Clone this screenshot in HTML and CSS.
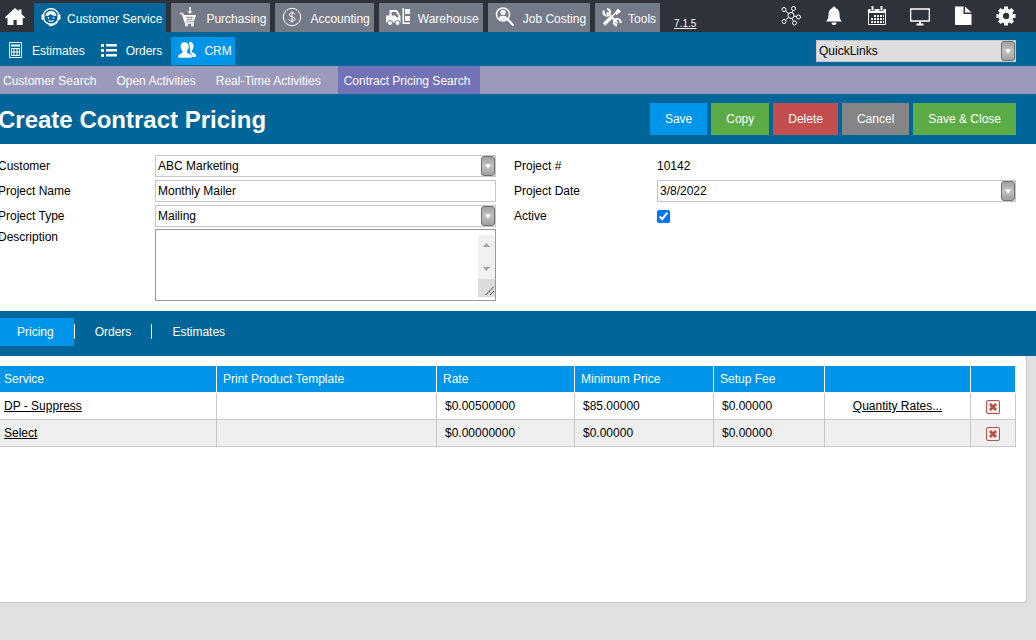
FILE: index.html
```html
<!DOCTYPE html>
<html lang="en">
<head>
    <meta charset="UTF-8">
    <meta name="viewport" content="width=device-width, initial-scale=1.0">
    <title>Create Contract Pricing</title>
    <link rel="stylesheet" href="styles.css">
</head>
<body>
    <header class="topbar">
        <a class="home" href="#" aria-label="Home">
            <svg width="20" height="18" viewBox="0 0 20 18" fill="#fff"><path d="M10 0 0 9.300l1 1.200L2.500 9.500V17h6v-5h3.200v5h6V9.500l1.300 1 1-1.200L16.500 6V1.500h-3V3.200z"/></svg>
        </a>
        <nav class="modules">
            <a class="module compact active" href="#">
                <svg width="20" height="20" viewBox="0 0 20 20"><circle cx="10" cy="9.500" r="7.800" fill="none" stroke="#fff" stroke-width="1.400"/><rect x="0.500" y="7" width="3" height="6" rx="1.500" fill="#fff"/><rect x="16.500" y="7" width="3" height="6" rx="1.500" fill="#fff"/><path d="M4.500 9c2 .3 4-.8 5-2 1.500 1.500 4 2 6 2-.5-3.500-2.500-5-5.500-5S5 5.500 4.500 9z" fill="#fff"/><circle cx="7.500" cy="10.800" r=".9" fill="#fff"/><circle cx="12.500" cy="10.800" r=".9" fill="#fff"/><path d="M7.500 13.500q2.500 1.500 5 0M17 13q-1 5-6 5" fill="none" stroke="#fff" stroke-width="1.100"/><ellipse cx="10" cy="18" rx="2.500" ry="1.200" fill="#fff"/></svg>
                Customer Service
            </a>
            <a class="module" href="#">
                <svg width="20" height="20" viewBox="0 0 20 20" fill="none" stroke="#fff"><path d="M2 6.500h2.500l3 9.500h8.500" stroke-width="1.500"/><path d="M5.500 8.500h12l-2 5.500h-8.500z" fill="#fff"/><path d="M8 10.500h7M8.500 12.500h6M10 9v5M13 9v5" stroke="#747a88" stroke-width=".6"/><path d="M12 0v5" stroke-width="1.500"/><path d="M9.500 4h5L12 7z" fill="#fff" stroke="none"/><circle cx="8.500" cy="18" r="1.500" fill="#fff" stroke="none"/><circle cx="14.500" cy="18" r="1.500" fill="#fff" stroke="none"/></svg>
                Purchasing
            </a>
            <a class="module" href="#">
                <svg width="20" height="20" viewBox="0 0 20 20" fill="none" stroke="#fff"><circle cx="10" cy="10" r="8.700"/><path d="M13 7.500C12.500 6 11.500 5.800 10 5.800S7.300 6.500 7.300 7.800C7.300 10.500 13 9 13 12c0 1.300-1.200 2.200-3 2.200s-3-.7-3.200-2.200M10 4.300v11.400"/></svg>
                Accounting
            </a>
            <a class="module" href="#">
                <svg width="24" height="20" viewBox="0 0 24 20" fill="#fff"><path fill-rule="evenodd" d="M0 8.500h3.500V3h7.500l3.500 6v6.500H0zM5.500 5v3.500H9l2 2h1.500V9L10 5z"/><circle cx="4" cy="16" r="2.500" stroke="#747a88"/><circle cx="11.500" cy="16" r="2.500" stroke="#747a88"/><path d="M16.500 1h1.500v14.500h6V17h-7.500zM19 2h5v5h-5zM19 9h5v5h-5z"/></svg>
                Warehouse
            </a>
            <a class="module" href="#">
                <svg width="20" height="20" viewBox="0 0 20 20"><circle cx="8" cy="7.500" r="6.500" fill="none" stroke="#fff" stroke-width="1.500"/><circle cx="8" cy="5.500" r="2.700" fill="#fff"/><path d="M3.500 11.500C4 9 6 9 8 9s4 0 4.500 2.500Q8 15 3.500 11.500z" fill="#fff"/><path d="m12.500 12 6 6.500" stroke="#fff" stroke-width="2.200"/></svg>
                Job Costing
            </a>
            <a class="module compact" href="#">
                <svg width="20" height="20" viewBox="0 0 20 20" fill="none" stroke="#fff"><path d="M5 5.500 15.500 16" stroke-width="2.300"/><path d="M2 3.500a3.300 3.300 0 1 0 3-1.500M18.500 16a3.300 3.300 0 1 0-3.500 2.500" stroke-width="2.200"/><path d="M2 17.500 8.500 11" stroke-width="3.500"/><path d="m8 11.500 6-6" stroke-width="1.500"/><path d="m13 6 3-4 2.500 2.500-4 3z" fill="#fff"/></svg>
                Tools
            </a>
        </nav>
        <a class="version" href="#">7.1.5</a>
        <nav class="shortcuts">
            <a href="#" aria-label="Network"><svg width="20" height="20" viewBox="0 0 20 20" fill="none" stroke="#fff"><circle cx="10" cy="9.500" r="3"/><circle cx="3" cy="3.500" r="2"/><circle cx="12.500" cy="2.500" r="2"/><circle cx="17.500" cy="11" r="2"/><circle cx="3" cy="15.500" r="2"/><circle cx="13.500" cy="17" r="2"/><path d="m4.500 5 3 2.500M12 4.500l-1 2.200M13 10l2.500.5M7.500 11.500l-3 2.500M11 12.500l1.500 2.700"/></svg></a>
            <a href="#" aria-label="Alerts"><svg width="20" height="20" viewBox="0 0 20 20" fill="#fff"><path d="M10 .5c1 0 1.500.8 1.500 1.800 3 .8 4 3 4 6 0 4 .8 5.500 2.500 7.200H2c1.700-1.700 2.500-3.200 2.500-7.200 0-3 1-5.200 4-6C8.500 1.300 9 .5 10 .5zM7.500 16.500h5a2.500 2.500 0 0 1-5 0z"/></svg></a>
            <a href="#" aria-label="Calendar"><svg width="20" height="20" viewBox="0 0 20 20" fill="none" stroke="#fff"><path d="M1.500 3.500h17v15h-17z"/><path d="M1 5h18" stroke-width="4"/><path d="M5.500 0v5M14.500 0v5" stroke="#2e323b" stroke-width="4"/><path d="M5.500 0v4.500M14.500 0v4.500" stroke-width="2"/><path d="M7 10h10M4 13h13M4 16h13" stroke-width="2" stroke-dasharray="2 1"/></svg></a>
            <a href="#" aria-label="Desktop"><svg width="20" height="20" viewBox="0 0 20 20" fill="none" stroke="#fff"><path d="M.7 3h18.600v12H.7z" stroke-width="1.300"/><path d="M10 15v3M6.500 18.500h7" stroke-width="2"/></svg></a>
            <a href="#" aria-label="Documents"><svg width="20" height="20" viewBox="0 0 20 20" fill="#fff"><path d="M2 .5h8.500v7.500h8v11H2zM12 .5 18.500 6.500H12z"/></svg></a>
            <a href="#" aria-label="Settings"><svg width="20" height="20" viewBox="0 0 20 20" fill="none" stroke="#fff"><circle cx="10" cy="10" r="5.300" stroke-width="4.200"/><path d="M10 .5v3M10 16.500v3M.5 10h3M16.500 10h3M3.300 3.300l2 2M14.700 14.700l2 2M3.300 16.700l2-2M14.700 5.300l2-2" stroke-width="4"/></svg></a>
        </nav>
    </header>

    <div class="subbar">
        <nav class="sections">
            <a class="section" href="#">
                <svg width="16" height="18" viewBox="0 0 16 18" fill="none" stroke="#fff"><path d="M2.500.5h12v15h-12z"/><path d="M4 3.500h9" stroke-width="2"/><path d="M4.500 6.500h8v7h-8zM4 10h9M7 6v8M10 6v8"/></svg>
                Estimates
            </a>
            <a class="section" href="#">
                <svg width="16" height="18" viewBox="0 0 16 18" fill="#fff"><path d="M0 2h3v3H0zM5 2h11v2.500H5zM0 7h3v3H0zM5 7h11v2.500H5zM0 12h3v3H0zM5 12h11v2.500H5z"/></svg>
                Orders
            </a>
            <a class="section active" href="#">
                <svg width="18" height="18" viewBox="0 0 18 18" fill="#fff"><path d="M11 0c3-.5 4.500 1.500 4.500 4 0 2-.5 3.300-1.500 4.500v1.500l4 2.500V15h-5z"/><path d="M6.500 0C9.500 0 11 2 11 4.300c0 2-.8 3.500-1.800 4.700v1.500l4.800 2.300V16H0v-3l4.200-2.300V9C3 8 2.300 6.500 2.300 4.300 2.300 2 3.700 0 6.500 0z" stroke="#0095e9" stroke-width=".6"/></svg>
                CRM
            </a>
        </nav>
        <div class="dropdown quicklinks">
            <select aria-label="QuickLinks"><option>QuickLinks</option></select>
            <span class="arrow"></span>
        </div>
    </div>

    <nav class="crm-nav">
        <a href="#">Customer Search</a>
        <a href="#">Open Activities</a>
        <a href="#">Real-Time Activities</a>
        <a class="active" href="#">Contract Pricing Search</a>
    </nav>

    <div class="titlebar">
        <h1>Create Contract Pricing</h1>
        <div class="actions">
            <button type="submit" form="contractForm" class="btn blue">Save</button>
            <button type="button" class="btn green">Copy</button>
            <button type="button" class="btn red">Delete</button>
            <button type="button" class="btn gray">Cancel</button>
            <button type="button" class="btn green">Save &amp; Close</button>
        </div>
    </div>

    <form id="contractForm" class="details">
        <label for="customer">Customer</label>
        <div class="dropdown">
            <select id="customer"><option>ABC Marketing</option></select>
            <span class="arrow"></span>
        </div>
        <label class="second" for="projectNumber">Project #</label>
        <output id="projectNumber">10142</output>

        <label for="projectName">Project Name</label>
        <input type="text" id="projectName" value="Monthly Mailer">
        <label class="second" for="projectDate">Project Date</label>
        <div class="dropdown">
            <input type="text" id="projectDate" value="3/8/2022">
            <button type="button" class="arrow" aria-label="Pick date"></button>
        </div>

        <label for="projectType">Project Type</label>
        <div class="dropdown">
            <select id="projectType"><option>Mailing</option></select>
            <span class="arrow"></span>
        </div>
        <label class="second" for="active">Active</label>
        <input type="checkbox" id="active" checked>

        <label class="top" for="description">Description</label>
        <div class="memo">
            <textarea id="description"></textarea>
            <svg class="scroller" width="17" height="62" viewBox="0 0 17 62"><path d="M0 0h17v44H0z" fill="#f1f1f1"/><path d="M0 44h17v18H0z" fill="#dcdcdc"/><path d="m5 12 3.500-4 3.500 4zM5 32h7l-3.500 4z" fill="#a3a3a3"/><path d="m7.500 60 8.500-8.500M12 60l4-4" stroke="#555" fill="none"/></svg>
        </div>
    </form>

    <nav class="tabs">
        <a class="active" href="#">Pricing</a>
        <a href="#">Orders</a>
        <a href="#">Estimates</a>
    </nav>

    <main class="panel">
        <table>
            <colgroup>
                <col class="service"><col class="template"><col class="rate"><col class="minimum"><col class="fee"><col class="quantity"><col class="remove">
            </colgroup>
            <thead>
                <tr>
                    <th>Service</th>
                    <th>Print Product Template</th>
                    <th>Rate</th>
                    <th>Minimum Price</th>
                    <th>Setup Fee</th>
                    <th></th>
                    <th></th>
                </tr>
            </thead>
            <tbody>
                <tr>
                    <td><a href="#">DP - Suppress</a></td>
                    <td></td>
                    <td>$0.00500000</td>
                    <td>$85.00000</td>
                    <td>$0.00000</td>
                    <td class="center"><a href="#">Quantity Rates...</a></td>
                    <td class="center"><button type="button" class="remove-btn" aria-label="Remove DP - Suppress"><svg width="14" height="14" viewBox="0 0 14 14" fill="none" stroke="#b2504a"><rect x=".5" y=".5" width="13" height="13" rx="1.500" fill="#fbecea"/><path d="m4 4 6 6M10 4l-6 6" stroke-width="2.800"/></svg></button></td>
                </tr>
                <tr>
                    <td><a href="#">Select</a></td>
                    <td></td>
                    <td>$0.00000000</td>
                    <td>$0.00000</td>
                    <td>$0.00000</td>
                    <td></td>
                    <td class="center"><button type="button" class="remove-btn" aria-label="Remove new row"><svg width="14" height="14" viewBox="0 0 14 14" fill="none" stroke="#b2504a"><rect x=".5" y=".5" width="13" height="13" rx="1.500" fill="#fbecea"/><path d="m4 4 6 6M10 4l-6 6" stroke-width="2.800"/></svg></button></td>
                </tr>
            </tbody>
        </table>
    </main>
</body>
</html>
```
FILE: styles.css
```css
* {
    box-sizing: border-box;
}
body {
    margin: 0;
    min-height: 100vh;
    display: flex;
    flex-direction: column;
    background-color: #e1e1e1;
    color: #000;
    font-family: "Liberation Sans", Arial, sans-serif;
    font-size: 12px;
    line-height: 16px;
}
a {
    color: inherit;
}
svg {
    display: block;
    flex-shrink: 0;
}
input, select, textarea, button {
    font: inherit;
    color: inherit;
    margin: 0;
}

/* Top bar */
.topbar {
    display: flex;
    height: 32px;
    padding-right: 20px;
    background-color: #2e323b;
    color: #fff;
}
.home {
    width: 34px;
    padding: 8px 5px;
}
.modules {
    display: flex;
    gap: 5px;
    padding-top: 3px;
}
.module {
    display: flex;
    align-items: center;
    gap: 8px;
    padding: 2px 4px 0 7px;
    background-color: #747a88;
    text-decoration: none;
    white-space: nowrap;
}
.module svg {
    margin-bottom: 4px;
}
.compact {
    gap: 6px;
}
.module.active {
    background-color: #006699;
}
.version {
    padding: 16px 0 0 14px;
    font-size: 10px;
}
.shortcuts {
    display: flex;
    align-items: center;
    gap: 23px;
    margin-left: auto;
}

/* Section bar */
.subbar {
    display: flex;
    align-items: center;
    justify-content: space-between;
    height: 34px;
    padding: 4px 20px 0 0;
    background-color: #006699;
    color: #fff;
}
.sections {
    display: flex;
}
.section {
    display: flex;
    align-items: center;
    gap: 9px;
    height: 28px;
    padding: 0 9px 0 7px;
    text-decoration: none;
}
.section.active {
    gap: 8px;
    padding: 0 3px 0 7px;
    background-color: #0095e9;
}
.quicklinks {
    width: 200px;
    color: #000;
}
.quicklinks select {
    background-color: #dedede;
}

.crm-nav {
    display: flex;
    height: 28px;
    background-color: #9a9abc;
    color: #fff;
    line-height: 30px;
}
.crm-nav a {
    padding: 0 17px 0 3px;
    text-decoration: none;
}
.crm-nav .active {
    padding: 0 10px 0 6px;
    background-color: #7272b6;
}

/* Title and buttons */
.titlebar {
    display: flex;
    align-items: center;
    justify-content: space-between;
    height: 50px;
    padding-right: 20px;
    background-color: #006699;
    color: #fff;
}
h1 {
    margin: 0 0 0 -2px;
    padding-top: 2px;
    font-size: 24px;
    line-height: 28px;
}
.actions {
    display: flex;
    gap: 4px;
}
.btn {
    height: 32px;
    padding: 0 15px;
    border: none;
    color: #fff;
    cursor: pointer;
}
.blue {
    background-color: #0095e9;
}
.green {
    background-color: #5bac47;
}
.red {
    background-color: #c24e4e;
}
.gray {
    background-color: #858585;
}

/* Contract details */
.details {
    display: grid;
    grid-template-columns: 155px 341fr 161px 359fr;
    row-gap: 3px;
    align-items: center;
    padding: 11px 20px 10px 0;
    background-color: #fff;
}
.details label {
    margin-left: -2px;
}
.details .second {
    margin-left: 18px;
}
.details .top {
    align-self: start;
    margin-top: -1px;
}
.dropdown {
    position: relative;
}
select,
input[type="text"] {
    display: block;
    width: 100%;
    height: 22px;
    padding: 0 2px;
    border: 1px solid #c6c6c6;
    border-radius: 0;
    background-color: #fff;
    appearance: none;
}
.arrow {
    position: absolute;
    top: 1px;
    right: 1px;
    width: 14px;
    height: 20px;
    padding: 0;
    border: 1px solid #707070;
    border-radius: 3px;
    background: linear-gradient(#a2a2a2, #c0c0c0 50%, #a2a2a2);
    pointer-events: none;
}
button.arrow {
    pointer-events: auto;
}
.arrow::after {
    content: "";
    position: absolute;
    top: 7px;
    left: 3px;
    border: 3px solid transparent;
    border-top: 5px solid #fff;
    border-bottom: none;
}
input[type="checkbox"] {
    width: 13px;
    height: 13px;
}
.memo {
    position: relative;
    margin-top: -1px;
}
textarea {
    display: block;
    width: 100%;
    height: 72px;
    padding: 2px;
    border: 1px solid #999;
    resize: none;
}
.scroller {
    position: absolute;
    top: 6px;
    right: 1px;
}

/* Tabs */
.tabs {
    display: flex;
    align-items: center;
    height: 45px;
    padding-bottom: 3px;
    background-color: #006699;
    color: #fff;
    line-height: 28px;
}
.tabs a {
    position: relative;
    padding: 0 20px 0 21px;
    text-decoration: none;
}
.tabs .active {
    padding-left: 17px;
    background-color: #0095e9;
}
.tabs a + a::before {
    content: "";
    position: absolute;
    top: 6px;
    left: 0;
    height: 15px;
    border-left: 1px solid #fff;
}

/* Pricing table */
.panel {
    flex: 1;
    margin: 0 9px 37px 0;
    padding: 10px 10px 10px 0;
    border: 1px solid #c8c8c8;
    border-width: 0 1px 1px 0;
    background-color: #fff;
}
table {
    width: 100%;
    table-layout: fixed;
    border-collapse: separate;
    border-spacing: 0;
}
.service {
    width: 217px;
}
.rate {
    width: 138px;
}
.minimum {
    width: 139px;
}
.fee {
    width: 111px;
}
.quantity {
    width: 146px;
}
.remove {
    width: 45px;
}
th {
    height: 27px;
    padding: 0 6px;
    border: 1px solid #fff;
    border-width: 0 1px 1px 0;
    background-color: #0095e9;
    color: #fff;
    font-weight: normal;
    text-align: left;
}
td {
    height: 27px;
    padding: 0 8px;
    border: 1px solid #c8c8c8;
    border-width: 0 1px 1px 0;
}
th:first-child,
td:first-child {
    padding-left: 4px;
}
tbody tr:nth-child(even) {
    background-color: #efefef;
}
.center {
    padding: 0;
    text-align: center;
}
.remove-btn {
    padding: 0;
    border: none;
    background: none;
    vertical-align: middle;
    cursor: pointer;
}
```
